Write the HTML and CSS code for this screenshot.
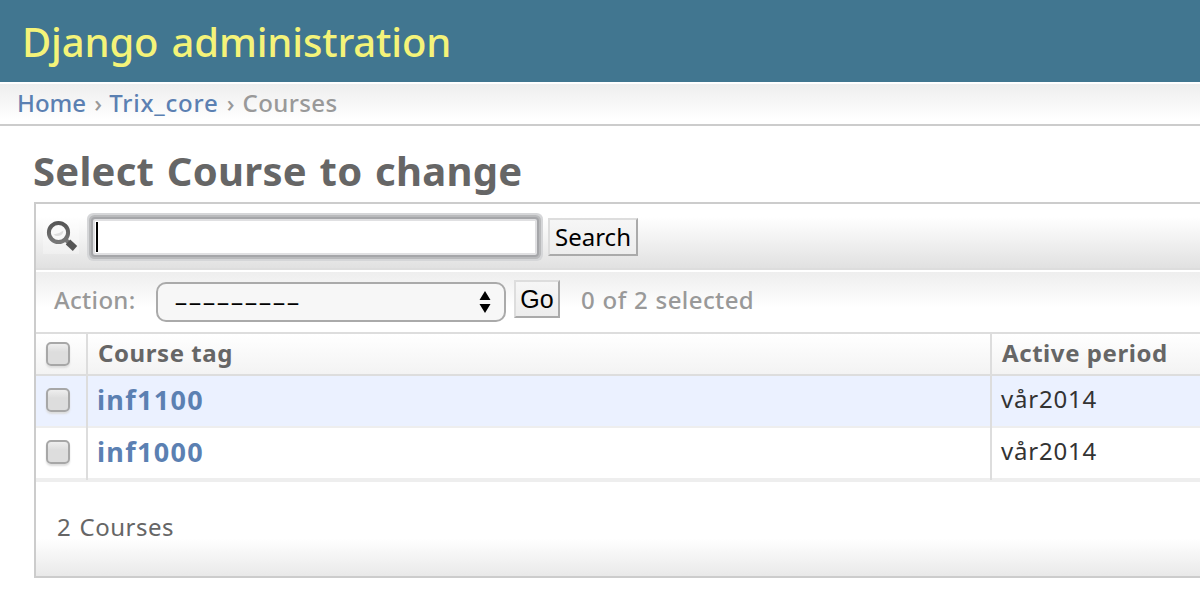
FILE: index.html
```
<!DOCTYPE html>
<html lang="en">
<head>
<meta charset="utf-8">
<title>Select Course to change</title>
<link rel="stylesheet" href="styles.css">
</head>
<body>
<header class="header"><span class="site-name">Django administration</span></header>
<nav class="breadcrumbs"><a class="crumb-home">Home</a><span class="sep">›</span><a class="crumb-app">Trix_core</a><span class="sep">›</span><span class="crumb-here">Courses</span></nav>
<main class="content">
  <h1 class="title"><span>Select Course to change</span></h1>
  <section class="module">
    <div class="search-bar">
      <svg class="search-icon" width="36" height="36" viewBox="0 0 36 36">
        <defs><linearGradient id="lens" x1="0" y1="0" x2="0" y2="1"><stop offset="0" stop-color="#555"/><stop offset="1" stop-color="#777"/></linearGradient></defs>
        <rect width="36" height="36" fill="#fff" opacity=".3"/>
        <path d="M21.500 20.500L26 25" stroke="#777" stroke-width="4"/>
        <path d="M25 24L32 30.500" stroke="#555" stroke-width="6.500"/>
        <circle cx="15.500" cy="14.500" r="9.600" fill="#f8f8f8" stroke="url(#lens)" stroke-width="4"/>
        <path d="M10.500 16.500Q16 16 20.500 12.500Q20 17.500 15 18Q12 18 10.500 16.500Z" fill="#ddd"/>
      </svg>
      <div class="search-input"><span class="caret"></span></div>
      <button class="button search-button"><span>Search</span></button>
    </div>
    <div class="actions">
      <span class="action-label">Action:</span>
      <div class="select"><span class="select-text">---------</span>
        <svg class="arrows" width="12" height="22" viewBox="0 0 12 22"><path d="M6 0L11.500 9H.5ZM6 22L.5 13H11.500Z" fill="#000"/></svg>
      </div>
      <button class="button go-button"><span>Go</span></button>
      <span class="counter">0 of 2 selected</span>
    </div>
    <div class="row row-head"><div class="cell"><i class="checkbox"></i></div><div class="cell"><span class="th-tag">Course tag</span></div><div class="cell"><span class="th-period">Active period</span></div></div>
    <div class="row row-selected"><div class="cell"><i class="checkbox"></i></div><div class="cell"><a class="tag">inf1100</a></div><div class="cell"><span class="period">vår2014</span></div></div>
    <div class="row"><div class="cell"><i class="checkbox"></i></div><div class="cell"><a class="tag">inf1000</a></div><div class="cell"><span class="period">vår2014</span></div></div>
    <div class="paginator"><span>2 Courses</span></div>
  </section>
</main>
</body>
</html>
```

FILE: styles.css
```
* { box-sizing: border-box; }
body { margin: 0; width: 1200px; height: 590px; overflow: hidden; background: #fff; font: 24px/30px "Noto Sans", "Open Sans", sans-serif; color: #666; }
.header { height: 82px; padding: 14px 0 0 22px; background: #417690; color: #f4f379; font-size: 40px; line-height: 56px; font-weight: 500; }
.site-name { letter-spacing: -.15px; word-spacing: 3px; }
.breadcrumbs { display: flex; height: 44px; padding: 4px 0 0 17px; border-top: 2px solid #fff; border-bottom: 2px solid #ccc; background: linear-gradient(#eee, #fff 90%); color: #999; font-weight: 500; }
.breadcrumbs a { color: #5b80b2; }
.crumb-app { margin-left: -1px; letter-spacing: .8px; }
.crumb-here { letter-spacing: .4px; }
.sep { width: 24px; text-align: center; }
.content { padding: 22px 0 0 34px; }
.title { margin: -1px 0 0 -1px; height: 55px; font-size: 40px; line-height: 48px; font-weight: 700; letter-spacing: .25px; word-spacing: 2px; white-space: nowrap; }
.module { height: 376px; border: 2px solid #ccc; border-right: 0; }
.search-bar { display: flex; height: 66px; padding: 14px 0 0 6px; border-bottom: 2px solid #ddd; background: linear-gradient(#fff, #fff 20%, #e1e1e1); }
.search-icon { flex: none; margin: 0 -1px 0 1px; }
.search-input { width: 444px; height: 36px; margin: 1px 0 0 15px; border: 2px solid #e0e0e2; border-radius: 2px; background: #fff; box-shadow: 0 0 0 2px #a5a6a9, 0 0 0 4px #b9babc, 0 0 0 6px #d5d6d8; }
.caret { display: block; width: 2px; height: 30px; margin: 1px 0 0 1px; background: #000; }
.button { height: 38px; padding: 0; border: 2px solid; border-color: #ddd #aaa #aaa #ddd; background: linear-gradient(#f6f6f6, #ededed); color: #000; font: 24px/34px "Noto Sans", sans-serif; white-space: nowrap; }
.search-button { width: 90px; margin-left: 11px; }
.actions { display: flex; height: 64px; padding-top: 8px; border-top: 2px solid #fff; border-bottom: 2px solid #ddd; background: linear-gradient(#eee, #fff 60%); color: #999; font-weight: 500; white-space: nowrap; }
.action-label { width: 102px; margin: 5px 0 0 18px; letter-spacing: .3px; }
.select { display: flex; justify-content: space-between; width: 350px; height: 40px; margin-top: 2px; padding: 7px 13px 0 16px; border: 2px solid #aaa; border-radius: 10px; background: #f7f7f7; color: #000; }
.select-text { font-weight: 400; line-height: 20px; transform: scaleX(1.81); transform-origin: left; }
.go-button { width: 46px; margin-left: 8px; padding-top: 0; font-family: "Liberation Sans", sans-serif; font-size: 25px; }
.counter { margin: 5px 0 0 21px; letter-spacing: .4px; word-spacing: .8px; }
.row { display: grid; grid-template-columns: 52px 904px 1fr; height: 52px; border-bottom: 2px solid #eee; }
.row-head { height: 42px; border-bottom-color: #ddd; background: linear-gradient(#fff, #f3f3f3); font-weight: 700; letter-spacing: .57px; }
.row-selected { background: #ebf1ff; }
.cell { margin-bottom: -2px; padding: 8px 0 0 10px; border-right: 2px solid #ddd; white-space: nowrap; }
.cell:last-child { border-right: 0; }
.row:not(.row-head) .cell:last-child { padding-left: 9px; }
.row-head .cell { padding-top: 4px; }
.checkbox { display: block; width: 24px; height: 24px; margin-top: 4px; border: 2px solid #a7a7a7; border-radius: 5px; background: linear-gradient(#eee, #ddd 40%); box-shadow: 0 2px 2px #ddd; }
.tag { display: block; margin: 1px 0 0 -1px; color: #5b80b2; font-size: 27px; font-weight: 700; letter-spacing: 1.3px; }
.period { color: #333; letter-spacing: .8px; }
.paginator { height: 96px; padding: 30px 0 0 21px; border-top: 2px solid #eee; background: linear-gradient(#fff 60%, #e9e9e9); letter-spacing: .5px; word-spacing: 1.500px; }
```
